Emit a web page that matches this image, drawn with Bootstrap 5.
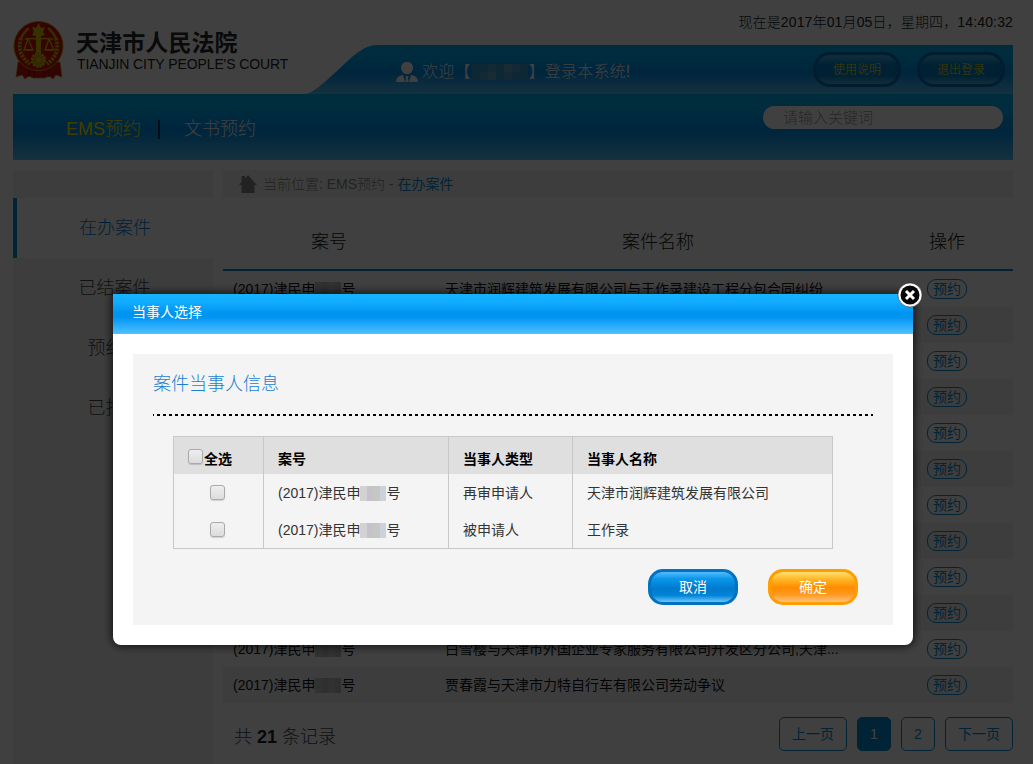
<!DOCTYPE html>
<html lang="zh-CN">
<head>
<meta charset="utf-8">
<meta name="viewport" content="width=device-width, initial-scale=1">
<title>天津市人民法院</title>
<link href="https://cdn.jsdelivr.net/npm/bootstrap@5.3.0/dist/css/bootstrap.min.css" rel="stylesheet">
<style>
  body{font-family:"Liberation Sans","Noto Sans CJK SC",sans-serif;font-size:14px;line-height:20px;color:#333;background:#fff;height:764px;overflow:hidden}
  .page{width:1000px;height:764px;margin-left:13px}
  .blue-bar{background:linear-gradient(#00b4f8 0,#00aef4 22%,#0098f4 50%,#0095f0 58%,#38b0f4 82%,#52c2fb 100%)}
  .site-head{height:94px}
  .site-logo{width:52px;height:60px;margin-top:20px}
  .site-name{font-size:23px;line-height:26px;font-weight:700;color:#2a2a2a;letter-spacing:.1px;margin-left:-1px}
  .site-en{font-size:14px;line-height:16px;color:#222;letter-spacing:-.09px;white-space:nowrap}
  .clock{height:45px;line-height:44px;letter-spacing:.14px;color:#222;font-weight:300}
  .welcome{height:49px;width:708px;clip-path:path("M0 49 C9 48 18 38 31 27 C44 15 57 0 72 0 L708 0 L708 49 Z");padding:0 8px 0 91px}
  .welcome-text{font-size:16px;letter-spacing:.2px;color:#fff;font-weight:300;white-space:nowrap;padding-top:4px;gap:1px}
  .blur-name{display:grid;grid-template-columns:repeat(7,8px);width:56px;height:16px;overflow:hidden}
  .blur-name i{height:8px;background:#389bd0}
  .blur-name i:nth-child(3n){background:#4da7d6}.blur-name i:nth-child(5n){background:#64afd2}
  .pill-top{width:88px;height:35px;border:3px solid #0072bd;border-radius:17px;background:linear-gradient(#42b6ee,#0083cc 35%,#0081c8 70%,#4ab3e8);color:#fff000;font-size:12px;line-height:31px;padding:0;text-align:center;font-weight:300}
  .main-nav{height:66px;padding-left:53px}
  .main-nav a{font-size:18px;color:#fff;text-decoration:none;font-weight:300}
  .main-nav a.active{color:#fff000}
  .nav-sep{width:2px;height:19px;background:#07395f;margin:0 24px 0 17px}
  .search-box{width:240px;height:23px;border-radius:12px;border:0;padding:0 20px;font-size:15px;color:#999;background:#fff;margin:12px 10px 0 0;font-weight:300}
  .search-box::placeholder{color:#999;opacity:1}
  .side{width:200px;background:#f4f4f4;padding-top:28px;height:594px}
  .side a{display:block;height:60px;line-height:61px;text-align:center;padding-left:3px;font-size:18px;color:#444;font-weight:300;text-decoration:none}
  .side a.active{background:#fff;border-left:4px solid #008fdf;padding-left:0;color:#0a7fd4}
  .crumb{height:28px;background:#f4f4f4;color:#888;padding-left:16px;font-weight:300}
  .case-table{table-layout:fixed;width:790px;margin:0;border-collapse:separate;border-spacing:0}
  .case-table th{height:73px;padding:16px 0 0;font-size:18px;font-weight:300;text-align:center;border-bottom:2px solid #008fd5;color:#111}
  .case-table td{height:36px;padding:0 10px;line-height:20px;white-space:nowrap;color:#111}
  .case-table tbody tr:nth-child(even){background:#f4f4f4}
  .book{display:block;width:40px;height:20px;border:1px solid #0090d4;border-radius:9px;color:#0090d4;line-height:18px;text-align:center;margin:0 auto;text-decoration:none}
  .hide-no{display:inline-grid;grid-template-columns:repeat(4,1fr);width:26px;height:15px;vertical-align:-3px}
  .hide-no i{background:#d2d2d2}.hide-no i:nth-child(2){background:#c4c4c8}.hide-no i:nth-child(3){background:#c6c6c4}.hide-no i:nth-child(4){background:#ccd2dc}
  .case-table .hide-no i{background:#bbb}.case-table .hide-no i:nth-child(odd){background:#c6c6c6}
  .total{font-size:18px;font-weight:300;color:#444;padding:5px 0 0 11px}
  .total b{font-weight:700;color:#222}
  .pages .pg{height:34px;width:34px;border:1px solid #0090d4;border-radius:5px;color:#0090d4;text-align:center;line-height:32px;text-decoration:none;font-size:14px}
  .pages .wide{width:68px}.pages .on{background:#008fd5;color:#fff}
  .modal-backdrop.show{opacity:.75}
  .party-dialog{width:800px;max-width:none;margin:294px 0 0 113px}
  .party-box{border:0;border-radius:0 0 8px 8px;height:351px;box-shadow:0 0 8px 2px rgba(0,0,0,.65)}
  .party-head{height:40px;line-height:37px;padding:0 19px;color:#fff;font-size:14px;background:linear-gradient(#14b4ff 0,#12acff 20%,#0094f1 48%,#0094f1 58%,#22a8fa 76%,#50c2ff 100%)}
  .party-body{margin:20px;height:271px;background:#f4f4f4;padding:0 20px}
  .party-title{font-size:18px;color:#1a7fcf;font-weight:300;height:60px;line-height:60px;margin:0}
  .dots{height:2px;background:repeating-linear-gradient(90deg,#000 0 3px,transparent 3px 6px);background-position-x:-2px}
  .party-table{width:660px;margin:20px 0 0 20px;table-layout:fixed;border:1px solid #c8c8c8;border-right:0;border-collapse:separate;border-spacing:0}
  .party-table th{height:37px;background:#dfdfdf;color:#000;padding:7px 0 0 14px;border-right:1px solid #c8c8c8;line-height:20px}
  .party-table td{height:37px;padding:0 0 0 14px;border-right:1px solid #c8c8c8;white-space:nowrap;line-height:20px}
  .old-check{appearance:none;width:15px;height:15px;border:1px solid #aaa;border-radius:3px;background:linear-gradient(#eee,#dcdcdc);box-shadow:0 1px 1px rgba(0,0,0,.15);display:block;margin:0}
  .pill-btn{width:90px;height:36px;padding:0;border-radius:15px;color:#fff;font-size:14px;line-height:30px;text-align:center}
  .pill-blue{border:3px solid #0072c0;background:linear-gradient(#55bdff 0,#0c97ea 22%,#007ace 55%,#0084d8 78%,#6fc6f8 100%)}
  .pill-gold{border:3px solid #ff9c00;background:linear-gradient(#ffe070 0,#ffb524 25%,#ff8c00 52%,#ff9920 75%,#ffc27a 100%)}
  .party-close{top:-12px;right:-10px;width:26px;height:26px;padding:0;border:0;background:none;line-height:0}
</style>
</head>
<body>
<div class="page">
  <header class="site-head d-flex justify-content-between">
    <div class="d-flex">
      <svg class="site-logo" viewBox="0 0 52 60">
        <path d="M5 42 3 57l6-2 3 4 4-3 4 2h12l4-2 4 3 3-4 6 2-2-15Z" fill="#c81010" stroke="#c89800" stroke-width=".7"/>
        <path d="M16 48v9M21 49v8M31 49v8M36 48v9" stroke="#900"/>
        <circle cx="25.500" cy="26" r="24.500" fill="#d00c08" stroke="#d0a000"/>
        <path d="M8 18Q3 34 17 44M43 18q5 16-9 26" fill="none" stroke="#d8b400" stroke-width="4" stroke-dasharray="2.500 1"/>
        <path d="M16 8Q10 13 8 19M35 8q6 5 8 11" fill="none" stroke="#d8a800" stroke-width="2.500"/>
        <path d="M25.500 3 28 8l4-1-2 5 2 3-4 1v17h-5V16l-4-1 2-3-2-5 4 1Z" fill="#dcc000"/>
        <path d="M12 19q7-1 13.500 0Q32 18 40 19M15 19l-4 11h9ZM36 19l-4 11h9Z" fill="none" stroke="#dcc000" stroke-width="1.400"/>
        <path d="M11 29h9q-4 4-9 0ZM32 29h9q-4 4-9 0Z" fill="#dcc000"/>
        <circle cx="25.500" cy="40" r="6.500" fill="#d0a000" stroke="#dcc000" stroke-width="2.500" stroke-dasharray="2.500 .8"/>
        <circle cx="25.500" cy="40" r="2.500" fill="#e0c800"/>
      </svg>
      <div class="ms-2 ps-1" style="padding-top:30px">
        <div class="site-name">天津市人民法院</div>
        <div class="site-en">TIANJIN CITY PEOPLE'S COURT</div>
      </div>
    </div>
    <div class="d-flex flex-column align-items-end">
      <div class="clock">现在是2017年01月05日，星期四，14:40:32</div>
      <div class="welcome blue-bar d-flex align-items-center">
        <svg width="22" height="20" viewBox="0 0 22 20" class="me-1 mt-1" fill="#fff"><ellipse cx="11" cy="6" rx="6" ry="6.200"/><path d="M0 20q0-6 7-7l2 7ZM22 20q0-6-7-7l-2 7ZM9.500 14h3l-.6 2 .8 4h-3.400l.8-4Z"/></svg>
        <div class="welcome-text me-auto d-flex align-items-center"><span>欢迎【</span><span class="blur-name"><i></i><i></i><i></i><i></i><i></i><i></i><i></i><i></i><i></i><i></i><i></i><i></i><i></i><i></i></span><span>】登录本系统!</span></div>
        <div class="d-flex gap-3"><a class="pill-top text-decoration-none">使用说明</a><a class="pill-top text-decoration-none">退出登录</a></div>
      </div>
    </div>
  </header>
  <nav class="main-nav blue-bar d-flex">
    <div class="d-flex align-items-center me-auto pt-1"><a href="#" class="active">EMS预约</a><span class="nav-sep"></span><a href="#">文书预约</a></div>
    <input class="search-box" placeholder="请输入关键词">
  </nav>
  <div class="d-flex" style="padding-top:10px;column-gap:10px">
    <aside class="side flex-shrink-0">
      <a href="#" class="active">在办案件</a><a href="#">已结案件</a><a href="#">预约单</a><a href="#">已拒绝</a>
    </aside>
    <main>
      <div class="crumb d-flex align-items-center"><svg width="18" height="18" viewBox="0 0 18 18" class="me-1" fill="#888"><path d="M9 0 18 10h-2.500v8h-13v-8H0L2.500 7V1H6v2.500Z"/></svg><span style="padding-left:2px">当前位置: EMS预约 - <span style="color:#0090d8;font-weight:400">在办案件</span></span></div>
      <table class="case-table">
        <colgroup><col style="width:212px"><col style="width:446px"><col style="width:132px"></colgroup>
        <thead><tr><th>案号</th><th>案件名称</th><th>操作</th></tr></thead>
        <tbody id="cases"></tbody>
      </table>
      <div class="d-flex justify-content-between align-items-center" style="padding-top:14px">
        <div class="total">共 <b>21</b> 条记录</div>
        <div class="pages d-flex" style="gap:10px"><a class="pg wide">上一页</a><a class="pg on">1</a><a class="pg">2</a><a class="pg wide">下一页</a></div>
      </div>
    </main>
  </div>
</div>

<div class="modal-backdrop show"></div>
<div class="modal d-block overflow-hidden" tabindex="-1" role="dialog">
  <div class="party-dialog modal-dialog">
    <div class="party-box modal-content">
      <div class="party-head">当事人选择</div>
      <button class="party-close position-absolute" aria-label="关闭"><svg width="26" height="26" viewBox="0 0 26 26"><circle cx="13" cy="13" r="12" fill="#fff" stroke="#222" stroke-opacity=".5"/><circle cx="13" cy="13" r="9.500" fill="#080808"/><path d="m9 9 8 8m0-8-8 8" stroke="#fff" stroke-width="3"/></svg></button>
      <div class="party-body">
        <h5 class="party-title">案件当事人信息</h5>
        <div class="dots"></div>
        <table class="party-table">
          <colgroup><col style="width:90px"><col style="width:185px"><col style="width:124px"><col style="width:260px"></colgroup>
          <thead><tr><th><span class="d-flex align-items-center"><input type="checkbox" class="old-check" style="margin:-6px 1px 0 0">全选</span></th><th>案号</th><th>当事人类型</th><th>当事人名称</th></tr></thead>
          <tbody>
            <tr><td class="p-0"><input type="checkbox" class="old-check mx-auto" style="transform:translateX(-1px)"></td><td>(2017)津民申<span class="hide-no"><i></i><i></i><i></i><i></i></span>号</td><td>再审申请人</td><td>天津市润辉建筑发展有限公司</td></tr>
            <tr><td class="p-0"><input type="checkbox" class="old-check mx-auto" style="transform:translateX(-1px)"></td><td>(2017)津民申<span class="hide-no"><i></i><i></i><i></i><i></i></span>号</td><td>被申请人</td><td>王作录</td></tr>
          </tbody>
        </table>
        <div class="d-flex justify-content-end" style="gap:30px;padding:20px 15px 0 0"><button class="pill-btn pill-blue">取消</button><button class="pill-btn pill-gold">确定</button></div>
      </div>
    </div>
  </div>
</div>
<script src="https://cdn.jsdelivr.net/npm/bootstrap@5.3.0/dist/js/bootstrap.bundle.min.js"></script>
<script>
  const names = {0:'天津市润辉建筑发展有限公司与王作录建设工程分包合同纠纷',10:'白雪樱与天津市外国企业专家服务有限公司开发区分公司,天津...',11:'贾春霞与天津市力特自行车有限公司劳动争议'};
  const no = '(2017)津民申<span class="hide-no"><i></i><i></i><i></i><i></i></span>号';
  document.getElementById('cases').innerHTML = Array.from({length:12}, (_, i) =>
    `<tr><td>${names[i] ? no : ''}</td><td>${names[i] || ''}</td><td><a class="book">预约</a></td></tr>`).join('');
</script>
</body>
</html>
